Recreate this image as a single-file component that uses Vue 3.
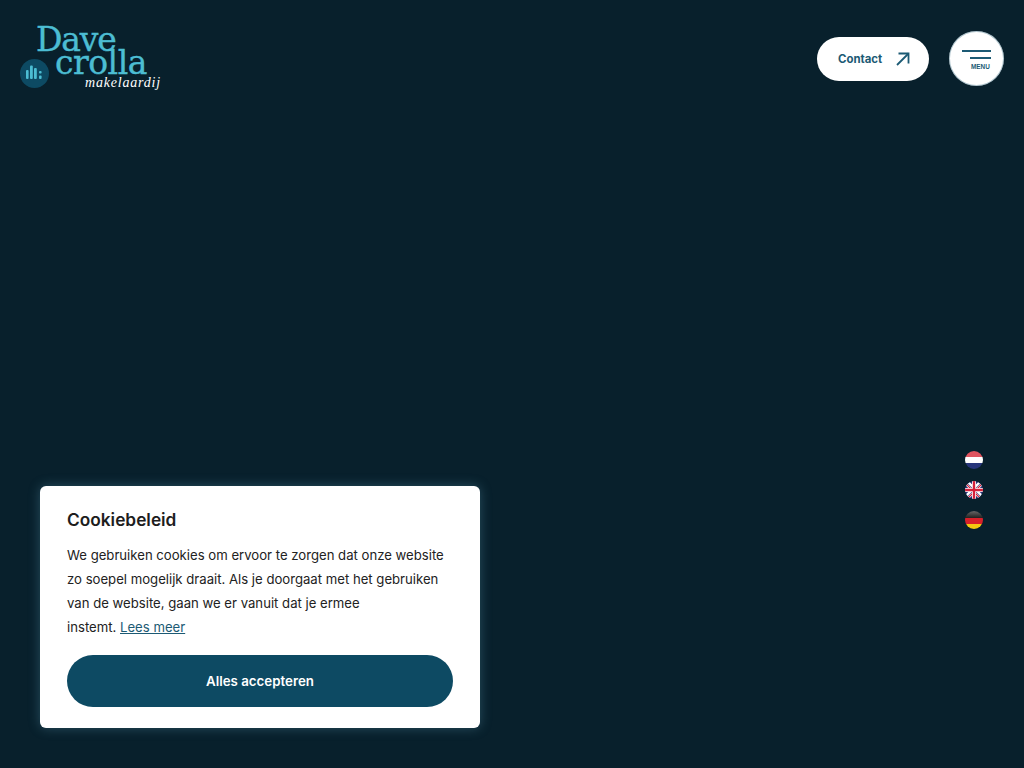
<template>
  <div class="page">
    <header class="site-header">
      <a class="logo" href="#">
        <span class="logo-badge">
          <svg width="29" height="29" viewBox="0 0 29 29">
            <circle cx="14.5" cy="14.5" r="14.5" fill="#0d4a63" />
            <g fill="#4cbdd3">
              <rect x="6" y="11" width="2.6" height="9" rx="1" />
              <rect x="10" y="6.5" width="2.8" height="13.5" rx="1" />
              <rect x="14" y="9" width="2.8" height="11" rx="1" />
              <rect x="19" y="12" width="2.6" height="2.6" rx="1" />
              <rect x="19" y="16.5" width="2.6" height="3.5" rx="1" />
            </g>
          </svg>
        </span>
        <span class="logo-word logo-dave">Dave</span>
        <span class="logo-word logo-crolla">crolla</span>
        <span class="logo-sub">makelaardij</span>
      </a>
      <nav class="header-actions">
        <a class="contact-btn" href="#">
          <span>Contact</span>
          <svg width="14" height="14" viewBox="0 0 14 14" fill="none" stroke="#1c5a74" stroke-width="1.8">
            <path d="M2.5 1.5H12.5V11.5" />
            <path d="M12.5 1.5L1 13" />
          </svg>
        </a>
        <button class="menu-btn" type="button">
          <span class="menu-line menu-line-long"></span>
          <span class="menu-line menu-line-short"></span>
          <span class="menu-label">MENU</span>
        </button>
      </nav>
    </header>

    <div class="lang-list">
      <span v-for="flag in flags" :key="flag.id" class="flag" :class="flag.id">
        <svg v-if="flag.id === 'en'" width="18" height="18" viewBox="0 0 18 18">
          <rect width="18" height="18" fill="#27357a" />
          <path d="M0 2L16 18M18 2L2 18M0 16L16 0M18 16L2 0" stroke="#fff" stroke-width="2.4" />
          <path d="M0 2L16 18M18 2L2 18" stroke="#d3203a" stroke-width="1.2" />
          <path d="M9 0V18M0 9H18" stroke="#fff" stroke-width="4" />
          <path d="M9 0V18M0 9H18" stroke="#d3203a" stroke-width="2.4" />
        </svg>
      </span>
    </div>

    <section class="cookie-card">
      <h2 class="cookie-title">Cookiebeleid</h2>
      <p class="cookie-text">
        We gebruiken cookies om ervoor te zorgen dat onze website<br />
        zo soepel mogelijk draait. Als je doorgaat met het gebruiken<br />
        van de website, gaan we er vanuit dat je ermee<br />
        instemt. <a href="#">Lees meer</a>
      </p>
      <button class="accept-btn" type="button">Alles accepteren</button>
    </section>
  </div>
</template>

<script setup>
const flags = [{ id: 'nl' }, { id: 'en' }, { id: 'de' }]
</script>

<style>
html,
body {
  margin: 0;
  background: #08202c;
}
</style>

<style scoped>
.page {
  position: relative;
  height: 768px;
  overflow: hidden;
  background: #08202c;
  font-family: Inter, Lato, sans-serif;
}

.site-header {
  display: flex;
  justify-content: space-between;
  align-items: flex-start;
  padding: 20px 20px 0;
}

.logo {
  position: relative;
  display: block;
  width: 145px;
  height: 75px;
  text-decoration: none;
}

.logo-badge {
  position: absolute;
  left: 0;
  top: 39px;
  width: 29px;
  height: 29px;
}

.logo-word {
  position: absolute;
  font-family: "DejaVu Serif", serif;
  font-weight: 400;
  color: #4cbdd3;
  line-height: 20px;
  -webkit-text-stroke: 0.4px #4cbdd3;
}

.logo-dave {
  left: 16px;
  top: 10px;
  font-size: 33px;
  letter-spacing: -1.2px;
}

.logo-crolla {
  left: 35px;
  top: 33px;
  font-size: 33px;
  letter-spacing: -0.5px;
}

.logo-sub {
  position: absolute;
  left: 65px;
  top: 56px;
  font-family: "Liberation Serif", serif;
  font-style: italic;
  font-size: 14px;
  letter-spacing: 0.8px;
  line-height: 1;
  color: #fff;
}

.header-actions {
  display: flex;
  align-items: center;
  gap: 20px;
  padding-top: 11px;
}

.contact-btn {
  display: flex;
  align-items: center;
  justify-content: space-between;
  box-sizing: border-box;
  width: 112px;
  height: 44px;
  padding: 0 19px 0 21px;
  border-radius: 22px;
  background: #fff;
  color: #1c5a74;
  font-size: 11.4px;
  font-weight: 700;
  text-decoration: none;
}

.menu-btn {
  position: relative;
  display: block;
  width: 55px;
  height: 55px;
  padding: 0;
  border: 0;
  border-radius: 50%;
  background: #fff;
  box-shadow: inset 0 0 0 1px rgba(28, 90, 116, 0.35);
}

.menu-line {
  position: absolute;
  height: 2px;
  background: #1c5a74;
}

.menu-line-long {
  left: 13px;
  top: 19px;
  width: 29px;
}

.menu-line-short {
  left: 21px;
  top: 26px;
  width: 21px;
}

.menu-label {
  position: absolute;
  left: 22px;
  top: 33px;
  font-size: 6.4px;
  font-weight: 900;
  line-height: 1;
  color: #1c5a74;
}

.lang-list {
  position: absolute;
  left: 965px;
  top: 451px;
  display: flex;
  flex-direction: column;
  gap: 12px;
}

.flag {
  display: block;
  width: 18px;
  height: 18px;
  border-radius: 50%;
  overflow: hidden;
}

.flag svg {
  display: block;
}

.nl {
  background: linear-gradient(#e0545f 0 33%, #fff 33% 67%, #27357a 67%);
}

.de {
  background: linear-gradient(#666, #222 38%, #d8202a 40% 72%, #f4c810 74%);
}

.cookie-card {
  position: absolute;
  left: 40px;
  top: 486px;
  box-sizing: border-box;
  width: 440px;
  height: 242px;
  padding: 23px 27px 21px;
  border-radius: 6px;
  background: #fff;
  box-shadow: 0 0 12px rgba(90, 150, 175, 0.4);
}

.cookie-title {
  margin: 0 0 12px;
  font-size: 17.3px;
  font-weight: 600;
  line-height: 22px;
  color: #1d1d1d;
}

.cookie-text {
  margin: 0 0 16px;
  font-size: 13.15px;
  font-weight: 400;
  line-height: 24px;
  color: #222;
}

.cookie-text a {
  color: #1c5a74;
}

.accept-btn {
  display: block;
  width: 100%;
  height: 52px;
  border: 0;
  border-radius: 26px;
  background: #0d4a63;
  color: #fff;
  font-family: inherit;
  font-size: 13.3px;
  font-weight: 600;
}
</style>
